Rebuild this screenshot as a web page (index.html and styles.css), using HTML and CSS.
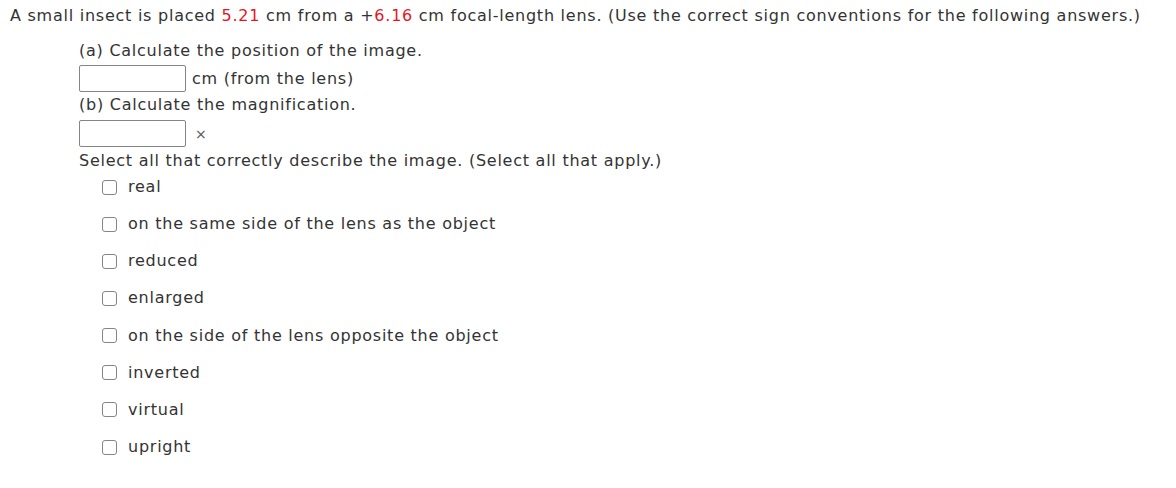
FILE: index.html
```html
<!DOCTYPE html>
<html>
<head>
<meta charset="utf-8">
<link rel="stylesheet" href="styles.css">
</head>
<body>
<div class="question">
  <p class="stem">A small insect is placed <span class="red">5.21</span> cm from a +<span class="red">6.16</span> cm focal-length lens. (Use the correct sign conventions for the following answers.)</p>
  <div class="parts">
    <div class="part-label">(a) Calculate the position of the image.</div>
    <div class="answer-row first"><span class="box"></span><span class="unit">cm (from the lens)</span></div>
    <div class="part-label b">(b) Calculate the magnification.</div>
    <div class="answer-row second"><span class="box"></span><span class="unit times">×</span></div>
    <div class="part-label select">Select all that correctly describe the image. (Select all that apply.)</div>
    <ul class="choices">
      <li><span class="cb"></span>real</li>
      <li><span class="cb"></span>on the same side of the lens as the object</li>
      <li><span class="cb"></span>reduced</li>
      <li><span class="cb"></span>enlarged</li>
      <li><span class="cb"></span>on the side of the lens opposite the object</li>
      <li><span class="cb"></span>inverted</li>
      <li><span class="cb"></span>virtual</li>
      <li><span class="cb"></span>upright</li>
    </ul>
  </div>
</div>
</body>
</html>
```
FILE: styles.css
```css
body {
  margin: 0;
  background: #fff;
  font-family: "DejaVu Sans", Verdana, sans-serif;
  font-size: 16px;
  letter-spacing: 0.75px;
  color: #333;
}
.question {
  padding: 5px 10px 4px;
}
.stem {
  margin: 0;
  line-height: 22px;
}
.red { color: #e8141c; }
.parts {
  padding-left: 69px;
  padding-top: 13px;
}
.part-label {
  line-height: 22px;
  height: 22px;
}
.answer-row {
  display: flex;
  align-items: center;
  height: 27px;
}
.answer-row.first { margin-top: 3px; }
.answer-row.second { margin-top: 4px; }
.part-label.b { margin-top: 2px; }
.part-label.select { margin-top: 3px; }
.box {
  box-sizing: border-box;
  width: 107px;
  height: 27px;
  border: 1px solid #858585;
  border-radius: 2px;
}
.unit { margin-left: 6px; }
.times { margin-left: 9px; font-size: 14px; color: #555; }
.choices {
  list-style: none;
  margin: -4px 0 0;
  padding: 0 0 0 23px;
}
.choices li {
  display: flex;
  align-items: center;
  height: 37.15px;
}
.cb {
  box-sizing: border-box;
  width: 15px;
  height: 15px;
  border: 1px solid #858585;
  border-radius: 3px;
  margin-right: 11px;
  margin-top: 1px;
}
```
